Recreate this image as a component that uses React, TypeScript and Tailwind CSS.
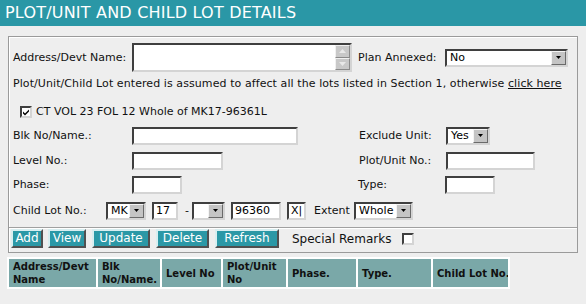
import React from "react";

const inputCls =
  "h-[18px] bg-white border-2 border-t-[#3f3f3f] border-l-[#3f3f3f] border-b-[#d4d4d4] border-r-[#d4d4d4] text-[11px] leading-[14px] pl-[2px] text-black overflow-hidden whitespace-nowrap";

function Input({ className = "", value = "" }: { className?: string; value?: string }) {
  return <div className={`${inputCls} ${className}`}>{value}</div>;
}

function Arrow() {
  return (
    <div className="w-[15px] h-full bg-[#c4c4c4] border border-t-[#f4f4f4] border-l-[#f4f4f4] border-b-[#6a6a6a] border-r-[#6a6a6a] flex items-center justify-center shrink-0">
      <svg width="7" height="4" viewBox="0 0 7 4">
        <path d="M1 0h5L3.5 3z" fill="#000" />
      </svg>
    </div>
  );
}

function Select({ className = "", value = "" }: { className?: string; value?: string }) {
  return (
    <div
      className={`h-[18px] bg-white border-2 border-t-[#3f3f3f] border-l-[#3f3f3f] border-b-[#d4d4d4] border-r-[#d4d4d4] flex items-stretch ${className}`}
    >
      <div className="flex-1 text-[11px] leading-[14px] pl-[3px] text-black whitespace-nowrap overflow-hidden">{value}</div>
      <Arrow />
    </div>
  );
}

function Btn({ label, className = "" }: { label: string; className?: string }) {
  return (
    <div
      className={`h-[19px] bg-[#2b98a6] text-white text-[12px] leading-[15px] flex items-center justify-center border-2 border-t-[#d8eef0] border-l-[#d8eef0] border-b-[#505050] border-r-[#505050] ${className}`}
    >
      {label}
    </div>
  );
}

function Lbl({ children, className = "" }: { children: React.ReactNode; className?: string }) {
  return <div className={`text-[11px] leading-[14px] text-[#111] whitespace-nowrap shrink-0 ${className}`}>{children}</div>;
}

export default function App() {
  return (
    <div className="w-[586px] h-[304px] bg-[#eeeeee] font-['DejaVu_Sans',Verdana,sans-serif] overflow-hidden">
      <div className="h-[26px] bg-[#2a97a6] text-white text-[16px] tracking-[0.2px] leading-[26px] pl-[5px] whitespace-nowrap">
        PLOT/UNIT AND CHILD LOT DETAILS
      </div>

      <div className="mt-[10px] ml-[8px] w-[570px] border border-[#9a9a9a] shadow-[inset_1px_1px_0_#ffffff] pb-[4px]">
        {/* Row 1 */}
        <div className="flex items-center h-[29px] mt-[6px] pl-[4px]">
          <Lbl className="w-[119px]">Address/Devt Name:</Lbl>
          <div className="w-[220px] h-[29px] flex bg-white border-2 border-t-[#3f3f3f] border-l-[#3f3f3f] border-b-[#d4d4d4] border-r-[#d4d4d4]">
            <div className="flex-1" />
            <div className="w-[15px] flex flex-col">
              <div className="flex-1 bg-[#c8c8c8] border border-t-[#f0f0f0] border-l-[#f0f0f0] border-b-[#8a8a8a] border-r-[#8a8a8a] flex items-center justify-center">
                <svg width="7" height="4" viewBox="0 0 7 4">
                  <path d="M3.5 0L7 4H0z" fill="#e8e8e8" />
                </svg>
              </div>
              <div className="flex-1 bg-[#c8c8c8] border border-t-[#f0f0f0] border-l-[#f0f0f0] border-b-[#8a8a8a] border-r-[#8a8a8a] flex items-center justify-center">
                <svg width="7" height="4" viewBox="0 0 7 4">
                  <path d="M0 0h7L3.5 4z" fill="#e8e8e8" />
                </svg>
              </div>
            </div>
          </div>
          <Lbl className="ml-[6px] w-[87px]">Plan Annexed:</Lbl>
          <Select className="w-[123px]" value="No" />
        </div>

        {/* Row 2 */}
        <div className="mt-[5px] pl-[4px]">
          <Lbl className="tracking-[0.08px]">
            Plot/Unit/Child Lot entered is assumed to affect all the lots listed in Section 1, otherwise{" "}
            <span className="underline">click here</span>
          </Lbl>
        </div>

        {/* Row 3 */}
        <div className="mt-[13px] h-[16px] flex items-center pl-[11px]">
          <div className="w-[12px] h-[12px] bg-white border-2 border-t-[#3f3f3f] border-l-[#3f3f3f] border-b-[#d4d4d4] border-r-[#d4d4d4] flex items-center justify-center">
            <svg width="8" height="8" viewBox="0 0 8 8">
              <path d="M1 3.5l2 2L7 1.5v2L3 7.5 1 5.5z" fill="#000" />
            </svg>
          </div>
          <Lbl className="ml-[4px]">CT VOL 23 FOL 12 Whole of MK17-96361L</Lbl>
        </div>

        {/* Row 4 */}
        <div className="mt-[7px] h-[18px] flex items-center pl-[4px]">
          <Lbl className="w-[119px]">Blk No/Name.:</Lbl>
          <Input className="w-[166px]" />
          <Lbl className="ml-[61px] w-[87px]">Exclude Unit:</Lbl>
          <Select className="w-[44px]" value="Yes" />
        </div>

        {/* Row 5 */}
        <div className="mt-[7px] h-[18px] flex items-center pl-[4px]">
          <Lbl className="w-[119px]">Level No.:</Lbl>
          <Input className="w-[91px]" />
          <Lbl className="ml-[136px] w-[87px]">Plot/Unit No.:</Lbl>
          <Input className="w-[89px]" />
        </div>

        {/* Row 6 */}
        <div className="mt-[6px] h-[18px] flex items-center pl-[4px]">
          <Lbl className="w-[119px]">Phase:</Lbl>
          <Input className="w-[50px]" />
          <Lbl className="ml-[176px] w-[87px]">Type:</Lbl>
          <Input className="w-[50px]" />
        </div>

        {/* Row 7 */}
        <div className="mt-[8px] h-[18px] flex items-center pl-[4px]">
          <Lbl className="w-[93px]">Child Lot No.:</Lbl>
          <Select className="w-[40px]" value="MK" />
          <Input className="ml-[6px] w-[26px]" value="17" />
          <Lbl className="ml-[7px] w-[7px]">-</Lbl>
          <Select className="w-[33px]" value="" />
          <Input className="ml-[6px] w-[50px]" value="96360" />
          <Input className="ml-[6px] w-[19px]" value="X|" />
          <Lbl className="ml-[8px] w-[40px]">Extent</Lbl>
          <Select className="w-[59px]" value="Whole" />
        </div>

        {/* separator */}
        <div className="mt-[7px] h-[2px] border-t border-t-[#a0a0a0] border-b border-b-white" />

        {/* Buttons */}
        <div className="h-[19px] flex items-center pl-[2px]">
          <Btn label="Add" className="w-[32px]" />
          <Btn label="View" className="ml-[5px] w-[38px]" />
          <Btn label="Update" className="ml-[6px] w-[58px]" />
          <Btn label="Delete" className="ml-[6px] w-[53px]" />
          <Btn label="Refresh" className="ml-[6px] w-[64px]" />
          <Lbl className="ml-[13px] w-[110px] text-[12px]">Special Remarks</Lbl>
          <div className="w-[12px] h-[12px] bg-white border-2 border-t-[#3f3f3f] border-l-[#3f3f3f] border-b-[#d4d4d4] border-r-[#d4d4d4]" />
        </div>
      </div>

      {/* Table header */}
      <div className="mt-[4px] ml-[7px] w-[503px] bg-white p-[2px] flex gap-[2px]">
        {[
          ["Address/Devt", "Name", "w-[87px]"],
          ["Blk", "No/Name.", "w-[62px]"],
          ["Level No", "", "w-[59px]"],
          ["Plot/Unit", "No", "w-[63px]"],
          ["Phase.", "", "w-[68px]"],
          ["Type.", "", "w-[73px]"],
          ["Child Lot No.", "", "w-[75px]"],
        ].map(([a, b, w]) => (
          <div
            key={a}
            className={`${w} h-[28px] bg-[#7aa8a8] text-[10px] leading-[13px] font-bold text-[#111] pl-[4px] flex flex-col justify-center whitespace-nowrap overflow-hidden`}
          >
            <div>{a}</div>
            {b ? <div>{b}</div> : null}
          </div>
        ))}
      </div>
    </div>
  );
}
